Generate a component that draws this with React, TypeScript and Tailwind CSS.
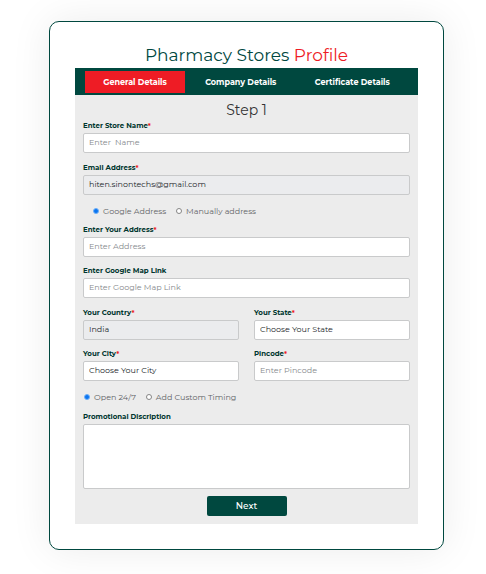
import type { ReactNode } from "react";

const control =
  "block h-5 w-full appearance-none rounded-xs border border-[#c9cacb] bg-white px-[5px] pb-[2px] text-[8px] leading-4 text-[#212529] placeholder:text-[#85888b] placeholder:opacity-100 disabled:bg-[#ebecee] disabled:opacity-100";

function Label({ id, required, children }: { id: string; required?: boolean; children: ReactNode }) {
  return (
    <label htmlFor={id} className="mb-px block text-[7px] leading-3 font-bold text-[#00362f]">
      {children}
      {required && <span className="text-[#ee1c25]">*</span>}
    </label>
  );
}

type FieldProps = { id: string; label: string; required?: boolean; placeholder?: string; value?: string };

function TextField({ id, label, required, placeholder, value }: FieldProps) {
  return (
    <div>
      <Label id={id} required={required}>{label}</Label>
      <input
        id={id}
        type="text"
        placeholder={placeholder}
        defaultValue={value}
        disabled={value !== undefined}
        className={control}
      />
    </div>
  );
}

function SelectField({ id, label, option, disabled }: { id: string; label: string; option: string; disabled?: boolean }) {
  return (
    <div>
      <Label id={id} required>{label}</Label>
      <select id={id} disabled={disabled} className={control}>
        <option>{option}</option>
      </select>
    </div>
  );
}

function Radio({ name, label, checked }: { name: string; label: string; checked?: boolean }) {
  return (
    <label className="flex items-center gap-1 text-[8px] leading-3 text-[#5f6366]">
      <input
        type="radio"
        name={name}
        defaultChecked={checked}
        className="size-[6px] appearance-none rounded-full border border-[#858585] bg-white checked:border-[#6fb0f8] checked:bg-[#0b75f0]"
      />
      {label}
    </label>
  );
}

export default function App() {
  return (
    <main className="bg-white pt-[21px] pr-[42px] pb-6 pl-[49px] font-['Montserrat','Inter',sans-serif]">
      <section className="rounded-[10px] border border-[#00483f] bg-white px-[25px] pt-[21px] pb-[25px] shadow-[0_0_40px_rgba(0,0,0,0.08)]">
        <h1 className="text-center text-[17px] leading-[25px] text-[#00483f]">
          Pharmacy Stores <span className="text-[#ee1c25]">Profile</span>
        </h1>
        <nav className="flex bg-[#00483f] px-[10px] pt-[3px] pb-[2px] text-[8px] leading-[22px] font-bold text-white">
          <button type="button" className="w-[100px] bg-[#ee1c25]">General Details</button>
          <button type="button" className="flex-1">Company Details</button>
          <button type="button" className="flex-1">Certificate Details</button>
        </nav>
        <form className="bg-[#ececec] px-2 pt-[6px] pb-2">
          <h2 className="text-center text-[14px] leading-[19px] text-[#333]">Step 1</h2>
          <TextField id="name" label="Enter Store Name" required placeholder="Enter  Name" />
          <div className="mt-[9px]">
            <TextField id="email" label="Email Address" required value="hiten.sinontechs@gmail.com" />
          </div>
          <div className="flex h-[29px] items-center gap-[10px] pt-[2px] pl-[10px]">
            <Radio name="address-mode" label="Google Address" checked />
            <Radio name="address-mode" label="Manually address" />
          </div>
          <TextField id="address" label="Enter Your Address" required placeholder="Enter Address" />
          <div className="mt-2">
            <TextField id="map" label="Enter Google Map Link" placeholder="Enter Google Map Link" />
          </div>
          <div className="mt-[9px] grid grid-cols-2 gap-x-[15px] gap-y-2">
            <SelectField id="country" label="Your Country" option="India" disabled />
            <SelectField id="state" label="Your State" option="Choose Your State" />
            <SelectField id="city" label="Your City" option="Choose Your City" />
            <TextField id="pincode" label="Pincode" required placeholder="Enter Pincode" />
          </div>
          <div className="flex h-[30px] items-center gap-[10px] pt-[2px] pl-px">
            <Radio name="timing" label="Open 24/7" checked />
            <Radio name="timing" label="Add Custom Timing" />
          </div>
          <Label id="description">Promotional Discription</Label>
          <textarea
            id="description"
            className="block h-[65px] w-full resize-none rounded-xs border border-[#c9cacb] bg-white px-[5px] text-[8px]"
          />
          <button
            type="button"
            className="mx-auto mt-[7px] block h-5 w-20 rounded-xs bg-[#00483f] text-[9px] leading-5 font-medium text-white"
          >
            Next
          </button>
        </form>
      </section>
    </main>
  );
}
